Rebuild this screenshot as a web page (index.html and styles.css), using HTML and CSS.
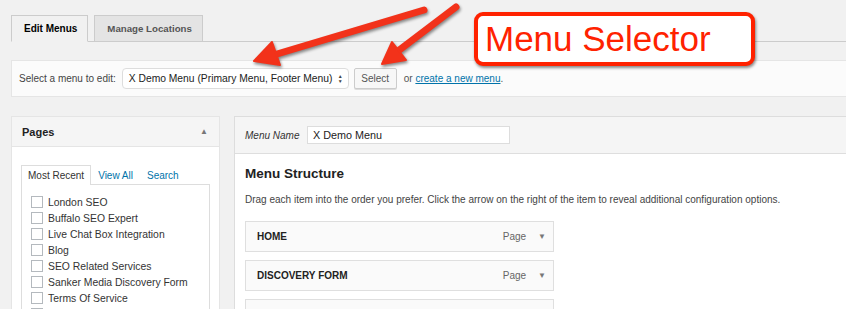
FILE: index.html
```html
<!doctype html>
<html>
  <head>
    <link rel="stylesheet" href="styles.css">
  </head>
  <body>
    <div class="wrap">
      <div class="nav-tabs">
        <span class="nav-tab active">Edit Menus</span>
        <span class="nav-tab">Manage Locations</span>
      </div>

      <div class="manage-menus">
        <span class="label">Select a menu to edit:</span>
        <span class="select-box">X Demo Menu (Primary Menu, Footer Menu)<span class="updown">&#9650;<br>&#9660;</span></span>
        <span class="button">Select</span>
        <span class="or">or <a href="#">create a new menu</a>.</span>
      </div>

      <div class="columns">
        <div class="sidebar">
          <div class="box-head">
            <span>Pages</span>
            <span class="toggle">&#9650;</span>
          </div>
          <div class="box-body">
            <div class="tabs">
              <span class="tab current">Most Recent</span>
              <a class="tab" href="#">View All</a>
              <a class="tab" href="#">Search</a>
            </div>
            <ul class="checklist">
              <li><span class="check"></span>London SEO</li>
              <li><span class="check"></span>Buffalo SEO Expert</li>
              <li><span class="check"></span>Live Chat Box Integration</li>
              <li><span class="check"></span>Blog</li>
              <li><span class="check"></span>SEO Related Services</li>
              <li><span class="check"></span>Sanker Media Discovery Form</li>
              <li><span class="check"></span>Terms Of Service</li>
              <li><span class="check"></span></li>
            </ul>
          </div>
        </div>

        <div class="menu-edit">
          <div class="menu-head">
            <span class="name-label">Menu Name</span>
            <span class="name-input">X Demo Menu</span>
          </div>
          <div class="menu-body">
            <h3>Menu Structure</h3>
            <p class="desc">Drag each item into the order you prefer. Click the arrow on the right of the item to reveal additional configuration options.</p>
            <div class="item"><span class="item-title">HOME</span><span class="item-type">Page</span><span class="item-arrow">&#9660;</span></div>
            <div class="item"><span class="item-title">DISCOVERY FORM</span><span class="item-type">Page</span><span class="item-arrow">&#9660;</span></div>
            <div class="item"></div>
          </div>
        </div>
      </div>
    </div>

    <svg class="arrows" width="846" height="309" viewBox="0 0 846 309">
      <g fill="#f2321a" stroke="#f2321a">
        <line x1="424" y1="10" x2="277" y2="54" stroke-width="7" stroke-linecap="round"/>
        <polygon points="254,61 280,65 272,42" stroke-width="2" stroke-linejoin="round"/>
        <line x1="456" y1="7" x2="398" y2="51" stroke-width="7" stroke-linecap="round"/>
        <polygon points="382,64 406,60 392,42" stroke-width="2" stroke-linejoin="round"/>
      </g>
    </svg>

    <div class="callout">Menu Selector</div>
  </body>
</html>
```

FILE: styles.css
```css
body {
  margin: 0;
  background: #f1f1f1;
  font-family: "Liberation Sans", Arial, sans-serif;
  color: #333;
  overflow: hidden;
  height: 309px;
  position: relative;
}

a {
  color: #0073aa;
}

.wrap {
  width: 860px;
  padding-left: 11px;
}

.nav-tabs {
  display: flex;
  gap: 6px;
  padding-top: 15px;
  border-bottom: 1px solid #ccc;
}

.nav-tab {
  height: 25px;
  line-height: 25px;
  padding: 0 10px 0 12px;
  font-size: 9.7px;
  font-weight: bold;
  color: #555;
  background: #e4e4e4;
  border: 1px solid #ccc;
  border-bottom: none;
  margin-bottom: -1px;
}

.nav-tab.active {
  color: #000;
  background: #f1f1f1;
  border-bottom: 1px solid #f1f1f1;
  font-size: 10px;
}

.manage-menus {
  margin-top: 18px;
  height: 35px;
  background: #fbfbfb;
  border: 1px solid #e5e5e5;
  display: flex;
  align-items: center;
  padding-left: 7px;
  font-size: 10px;
  white-space: nowrap;
}

.label {
  color: #444;
}

.select-box {
  margin-left: 6px;
  height: 19px;
  width: 214px;
  flex: none;
  padding-left: 6px;
  padding-right: 5px;
  border: 1px solid #ddd;
  border-radius: 4px;
  background: #fff;
  font-size: 10.3px;
  color: #222;
  display: flex;
  align-items: center;
  justify-content: space-between;
}

.updown {
  font-size: 5px;
  line-height: 5px;
  color: #444;
}

.button {
  margin-left: 5px;
  height: 19px;
  width: 41px;
  flex: none;
  border: 1px solid #ccc;
  border-radius: 2px;
  background: #f7f7f7;
  box-shadow: 0 1px 0 #ddd;
  font-size: 10px;
  color: #555;
  display: flex;
  align-items: center;
  justify-content: center;
}

.or {
  margin-left: 7px;
  color: #555;
}

.columns {
  display: flex;
  gap: 14px;
  margin-top: 19px;
}

.sidebar {
  width: 209px;
  flex-shrink: 0;
  background: #fff;
  border: 1px solid #e5e5e5;
  height: 200px;
  box-sizing: border-box;
}

.box-head {
  height: 29px;
  background: #f5f5f5;
  border-bottom: 1px solid #e5e5e5;
  display: flex;
  align-items: center;
  justify-content: space-between;
  padding: 0 10px;
  font-size: 11px;
  font-weight: bold;
  color: #222;
}

.toggle {
  font-size: 8px;
  color: #777;
  margin-right: 1px;
}

.box-body {
  padding: 18px 9px 0 9px;
}

.tabs {
  display: flex;
  font-size: 10px;
}

.tab {
  height: 18px;
  line-height: 19px;
  padding: 0 6px;
  text-decoration: none;
  border: 1px solid transparent;
  border-bottom: none;
}

.tab.current {
  border-color: #ddd;
  color: #333;
  background: #fff;
  margin-bottom: -1px;
  height: 19px;
}

.checklist {
  list-style: none;
  margin: 0;
  padding: 9px 0 0 9px;
  border: 1px solid #ddd;
  height: 140px;
  font-size: 10.4px;
  color: #333;
}

.checklist li {
  height: 16px;
  display: flex;
  align-items: center;
}

.check {
  width: 10px;
  height: 10px;
  border: 1px solid #b4b9be;
  background: #fff;
  margin-right: 5px;
}

.menu-edit {
  flex: 1;
  background: #fff;
  border: 1px solid #ddd;
  height: 200px;
}

.menu-head {
  height: 36px;
  background: #f5f5f5;
  border-bottom: 1px solid #dedede;
  display: flex;
  align-items: center;
  padding-left: 10px;
}

.name-label {
  font-size: 10px;
  font-style: italic;
  color: #333;
  width: 62px;
}

.name-input {
  width: 196px;
  height: 16px;
  line-height: 16px;
  padding-left: 5px;
  background: #fff;
  border: 1px solid #ddd;
  font-size: 10.8px;
  color: #222;
}

.menu-body {
  padding: 12px 10px 0 10px;
}

h3 {
  margin: 0;
  font-size: 13.5px;
  color: #222;
  line-height: 16px;
}

.desc {
  margin: 12px 0 0 0;
  font-size: 10px;
  color: #444;
}

.item {
  width: 307px;
  height: 29px;
  margin-top: 8px;
  background: #fafafa;
  border: 1px solid #dfdfdf;
  display: flex;
  align-items: center;
  font-size: 10px;
}

.desc + .item {
  margin-top: 16px;
}

.item-title {
  flex: 1;
  padding-left: 11px;
  font-weight: bold;
  color: #222;
}

.item-type {
  color: #666;
}

.item-arrow {
  font-size: 8px;
  color: #777;
  margin: 0 7px 0 12px;
}

.arrows {
  position: absolute;
  left: 0;
  top: 0;
  filter: drop-shadow(1px 2px 1.5px rgba(0, 0, 0, 0.45));
}

.callout {
  position: absolute;
  left: 474px;
  top: 12px;
  height: 46px;
  width: 266px;
  border: 4px solid #ff2200;
  border-radius: 9px;
  background: #fff;
  box-shadow: 1px 2px 3px rgba(0, 0, 0, 0.45);
  color: #ff2200;
  font-size: 35px;
  line-height: 46px;
  padding-left: 7px;
}
```
